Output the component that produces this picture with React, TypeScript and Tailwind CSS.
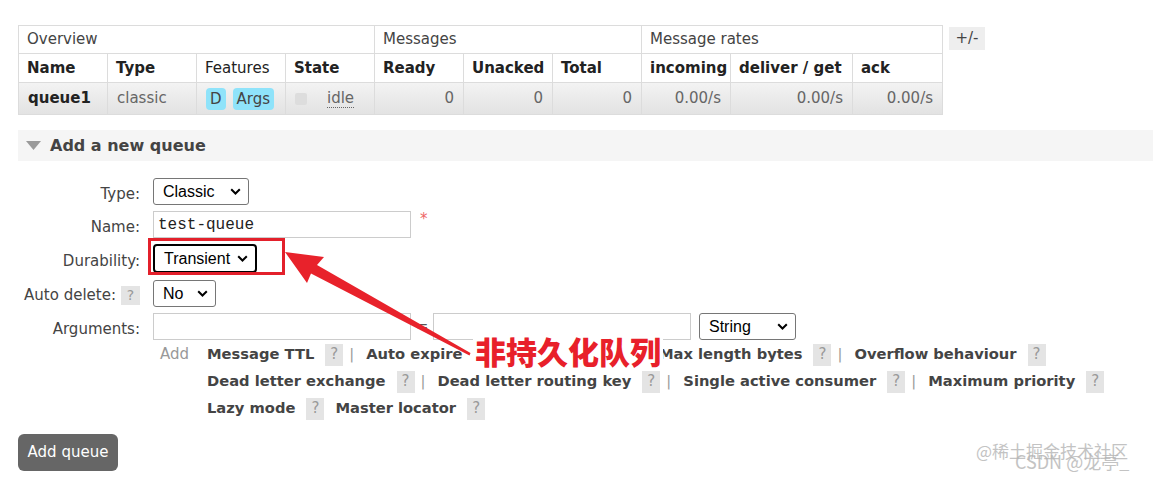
import React from 'react';

function Chevron() {
  return (
    <svg width="11" height="7" viewBox="0 0 11 7" className="shrink-0">
      <path d="M1.2 1.2 L5.5 5.5 L9.8 1.2" fill="none" stroke="#000" strokeWidth="2" />
    </svg>
  );
}

function Select({ value, className }: { value: string; className: string }) {
  return (
    <div
      className={`flex items-center justify-between bg-white pl-[9px] pr-[7px] font-['Liberation_Sans',sans-serif] text-[16px] text-black ${className}`}
    >
      <span>{value}</span>
      <Chevron />
    </div>
  );
}

function Help({ small }: { small?: boolean }) {
  return (
    <span
      className={`inline-flex items-center justify-center bg-[#e4e4e4] font-normal text-[#999] ${
        small ? 'h-[19px] w-[19px] text-[14px]' : 'h-[22px] w-[18px] text-[15px]'
      }`}
    >
      ?
    </span>
  );
}

function Item({ text }: { text: string }) {
  return (
    <span className="inline-flex items-center">
      <span>{text}</span>
      <span className="ml-[11px]">
        <Help />
      </span>
    </span>
  );
}

function Sep() {
  return <span className="ml-[6px] mr-[12px] font-normal text-[#999]">|</span>;
}

const th = 'border border-[#dcdcdc] px-[8px] text-left';
const td = 'border border-[#dcdcdc] px-[9px]';

export default function App() {
  return (
    <div className="relative h-[480px] w-[1153px] overflow-hidden bg-white font-['DejaVu_Sans',sans-serif] text-[15px] text-[#444]">
      <div className="pl-[18px] pt-[25px]">
        {/* queues table */}
        <div className="flex items-start gap-[6px]">
          <table className="w-[924px] table-fixed border-collapse">
            <colgroup>
              <col className="w-[89px]" />
              <col className="w-[89px]" />
              <col className="w-[89px]" />
              <col className="w-[89px]" />
              <col className="w-[89px]" />
              <col className="w-[89px]" />
              <col className="w-[89px]" />
              <col className="w-[89px]" />
              <col className="w-[122px]" />
              <col className="w-[90px]" />
            </colgroup>
            <thead>
              <tr className="h-[28px]">
                <th colSpan={4} className={`${th} font-normal`}>Overview</th>
                <th colSpan={3} className={`${th} font-normal`}>Messages</th>
                <th colSpan={3} className={`${th} font-normal`}>Message rates</th>
              </tr>
              <tr className="h-[29px] text-[#222]">
                <th className={`${th} font-bold`}>Name</th>
                <th className={`${th} font-bold`}>Type</th>
                <th className={`${th} font-normal`}>Features</th>
                <th className={`${th} font-bold`}>State</th>
                <th className={`${th} font-bold`}>Ready</th>
                <th className={`${th} font-bold`}>Unacked</th>
                <th className={`${th} font-bold`}>Total</th>
                <th className={`${th} font-bold`}>incoming</th>
                <th className={`${th} whitespace-nowrap font-bold`}>deliver / get</th>
                <th className={`${th} font-bold`}>ack</th>
              </tr>
            </thead>
            <tbody>
              <tr className="h-[32px] bg-gradient-to-b from-[#f3f3f3] to-[#e2e2e2] text-[#666]">
                <td className={`${td} font-bold text-[#222]`}>queue1</td>
                <td className={td}>classic</td>
                <td className={td}>
                  <div className="flex gap-[7px] text-[#444]">
                    <span className="rounded-[4px] bg-[#8fe3fa] px-[4px] leading-[22px]">D</span>
                    <span className="rounded-[4px] bg-[#8fe3fa] px-[4px] leading-[22px]">Args</span>
                  </div>
                </td>
                <td className={td}>
                  <div className="flex items-center">
                    <span className="h-[12px] w-[12px] rounded-[2px] bg-[#dddddd]" />
                    <span className="ml-[20px] border-b border-dotted border-[#666] leading-[18px]">idle</span>
                  </div>
                </td>
                <td className={`${td} text-right`}>0</td>
                <td className={`${td} text-right`}>0</td>
                <td className={`${td} text-right`}>0</td>
                <td className={`${td} text-right`}>0.00/s</td>
                <td className={`${td} text-right`}>0.00/s</td>
                <td className={`${td} text-right`}>0.00/s</td>
              </tr>
            </tbody>
          </table>
          <div className="mt-[2px] flex h-[23px] w-[36px] items-center justify-center bg-[#eeeeee] text-[#444]">+/-</div>
        </div>

        {/* add a new queue */}
        <div className="mt-[15px] flex h-[31px] items-center bg-[#f5f5f5] pl-[8px]">
          <svg width="15" height="9" viewBox="0 0 15 9">
            <path d="M0 0 H15 L7.5 9 Z" fill="#9a9a9a" />
          </svg>
          <span className="ml-[9px] text-[16px] font-bold text-[#444]">Add a new queue</span>
        </div>

        <div className="mt-[17px] flex flex-col text-[#444]">
          <div className="flex h-[27px] items-center">
            <div className="w-[122px] pt-[5px] text-right">Type:</div>
            <Select value="Classic" className="ml-[13px] h-[27px] w-[96px] rounded-[3px] border border-[#767676]" />
          </div>
          <div className="mt-[6px] flex h-[27px] items-center">
            <div className="w-[122px] pt-[5px] text-right">Name:</div>
            <div className="ml-[13px] flex h-[27px] w-[258px] items-center border border-[#cccccc] pl-[4px] font-['Liberation_Mono',monospace] text-[16px] text-[#222]">
              test-queue
            </div>
            <span className="mb-[10px] ml-[9px] text-[#e66]">*</span>
          </div>
          <div className="mt-[6px] flex h-[29px] items-center">
            <div className="w-[122px] pt-[5px] text-right">Durability:</div>
            <Select value="Transient" className="ml-[13px] h-[29px] w-[104px] rounded-[4px] border-2 border-black" />
          </div>
          <div className="mt-[7px] flex h-[27px] items-center">
            <div className="flex w-[122px] items-center justify-end pt-[3px]">
              <span>Auto delete:</span>
              <span className="ml-[5px]">
                <Help small />
              </span>
            </div>
            <Select value="No" className="ml-[13px] h-[27px] w-[63px] rounded-[3px] border border-[#767676]" />
          </div>
          <div className="mt-[6px] flex h-[27px] items-center">
            <div className="w-[122px] pt-[5px] text-right">Arguments:</div>
            <div className="ml-[13px] h-[27px] w-[258px] border border-[#cccccc]" />
            <span className="w-[22px] text-center text-[#555]">=</span>
            <div className="h-[27px] w-[258px] border border-[#cccccc]" />
            <Select value="String" className="ml-[8px] h-[27px] w-[97px] rounded-[3px] border border-[#767676]" />
          </div>
          <div className="flex">
            <div className="w-[135px]" />
            <div className="w-[54px] pl-[7px] pt-[4px] leading-[20px] text-[#999]">Add</div>
            <div className="flex flex-col text-[14.7px] font-bold leading-[27px] text-[#444]">
              <div className="flex items-center">
                <Item text="Message TTL" />
                <Sep />
                <Item text="Auto expire" />
                <Sep />
                <Item text="Max length" />
                <Sep />
                <Item text="Max length bytes" />
                <Sep />
                <Item text="Overflow behaviour" />
              </div>
              <div className="flex items-center">
                <Item text="Dead letter exchange" />
                <Sep />
                <Item text="Dead letter routing key" />
                <Sep />
                <Item text="Single active consumer" />
                <Sep />
                <Item text="Maximum priority" />
              </div>
              <div className="flex items-center gap-[11px]">
                <Item text="Lazy mode" />
                <Item text="Master locator" />
              </div>
            </div>
          </div>
          <div className="mt-[13px]">
            <button className="h-[37px] w-[100px] rounded-[6px] bg-[#666666] text-[15px] text-white">Add queue</button>
          </div>
        </div>
      </div>

      {/* annotation */}
      <div className="pointer-events-none absolute left-[148px] top-[238px] h-[37px] w-[137px] border-[3px] border-[#e3202b]" />
      <svg className="pointer-events-none absolute left-0 top-0" width="1153" height="480">
        <polygon
          points="285,252 324,257 317,265 470.5,353 469.5,355.5 311,273.5 307,283"
          fill="#e8222b"
        />
      </svg>
      <div className="pointer-events-none absolute left-[473px] top-[333px] bg-white px-[2px] py-[2px] font-['Noto_Sans_CJK_SC',sans-serif] text-[31px] font-black leading-none text-[#e8202a] [text-shadow:2px_0_0_#fff,-2px_0_0_#fff,0_2px_0_#fff,0_-2px_0_#fff,2px_2px_0_#fff,-2px_-2px_0_#fff,2px_-2px_0_#fff,-2px_2px_0_#fff]">
        非持久化队列
      </div>
      <div className="pointer-events-none absolute left-[976px] top-[442px] font-['Noto_Sans_CJK_SC',sans-serif] text-[17px] leading-none text-[#b5b5b5] opacity-80">
        @稀土掘金技术社区
      </div>
      <div className="pointer-events-none absolute left-[1015px] top-[452px] font-['Noto_Sans_CJK_SC',sans-serif] text-[18px] leading-none text-[#b5b5b5] opacity-80">
        CSDN @龙亭_
      </div>
    </div>
  );
}
